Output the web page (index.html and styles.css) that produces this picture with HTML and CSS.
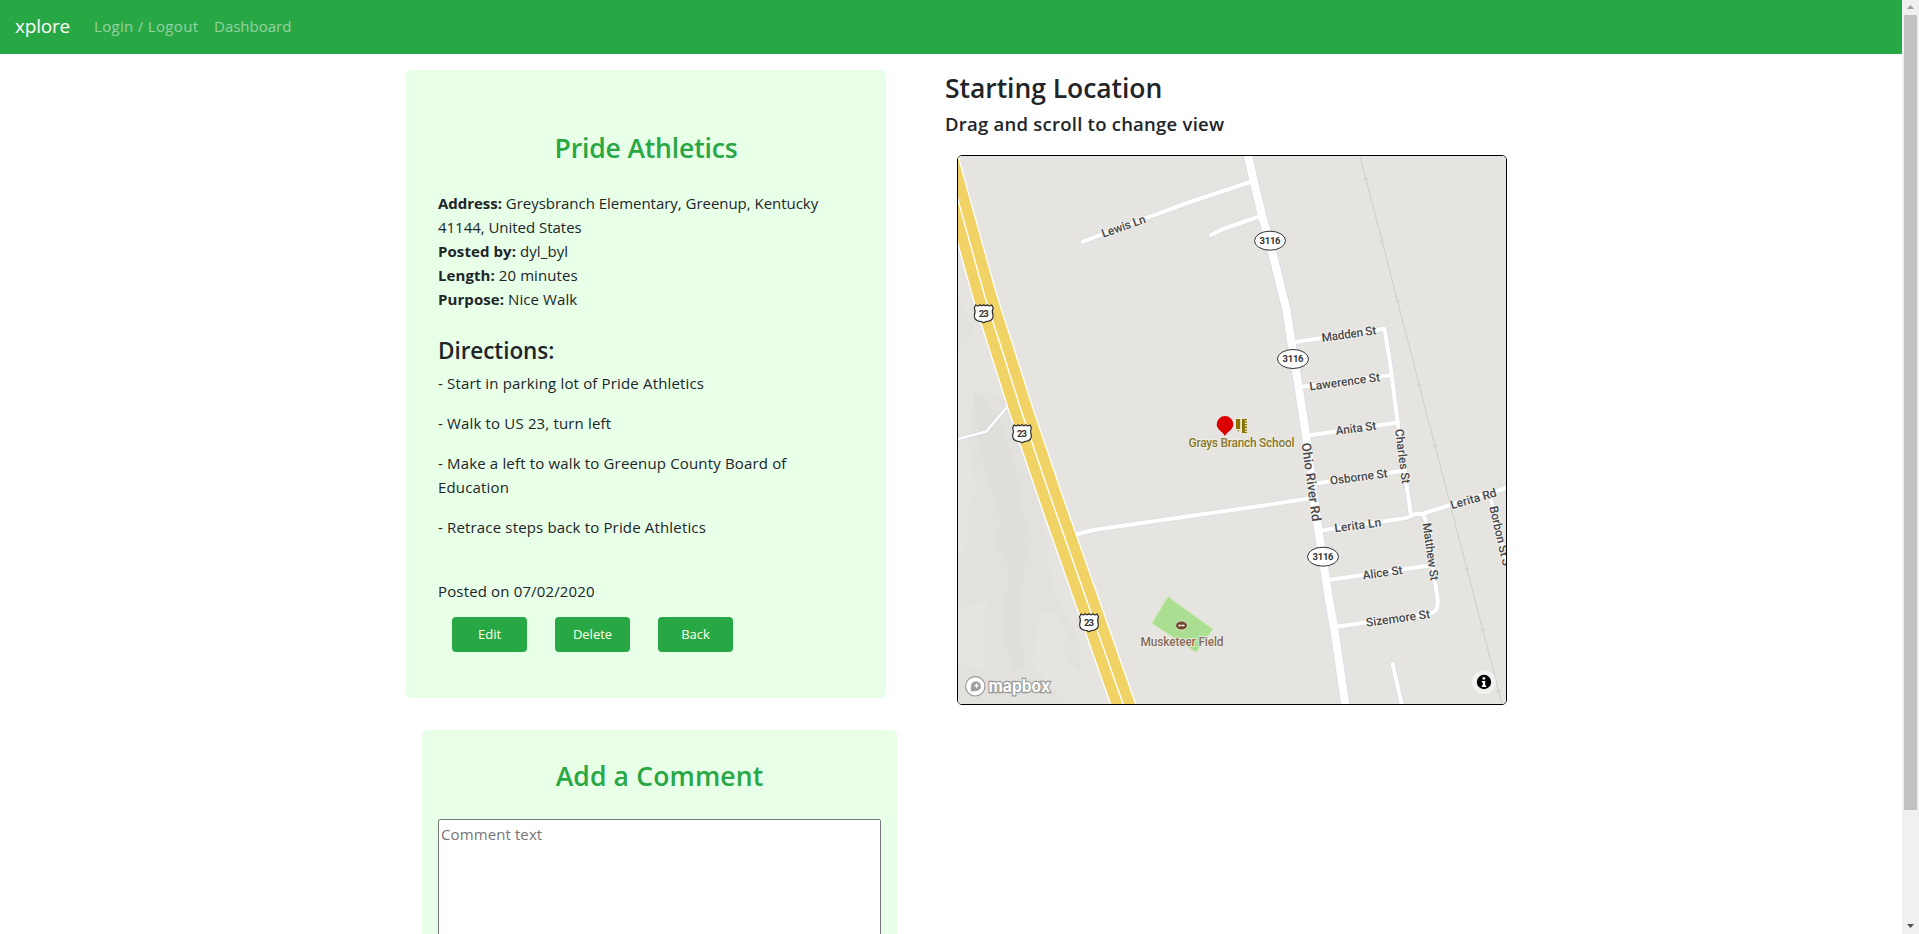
FILE: index.html
```html
<!DOCTYPE html>
<html lang="en">
<head>
<meta charset="utf-8">
<title>xplore</title>
<link rel="stylesheet" href="styles.css">
</head>
<body>
<div class="page">
  <nav class="navbar">
    <a class="brand">xplore</a>
    <a class="nav-link nav-login">Login / Logout</a>
    <a class="nav-link nav-dash">Dashboard</a>
  </nav>
  <main class="container">
    <div class="col-left">
      <section class="card walk">
        <h3 class="title">Pride Athletics</h3>
        <div class="facts">
          <div class="address"><b>Address:</b> Greysbranch Elementary, Greenup, Kentucky<br>41144, United States</div>
          <div><b>Posted by:</b> dyl_byl</div>
          <div><b>Length:</b> 20 minutes</div>
          <div><b>Purpose:</b> Nice Walk</div>
        </div>
        <h4 class="subtitle">Directions:</h4>
        <p>- Start in parking lot of Pride Athletics</p>
        <p>- Walk to US 23, turn left</p>
        <p>- Make a left to walk to Greenup County Board of<br>Education</p>
        <p>- Retrace steps back to Pride Athletics</p>
        <div class="posted">Posted on 07/02/2020</div>
        <div class="buttons">
          <button class="btn">Edit</button>
          <button class="btn">Delete</button>
          <button class="btn">Back</button>
        </div>
      </section>
      <section class="card comment">
        <h3 class="title title-comment">Add a Comment</h3>
        <textarea class="comment-text" placeholder="Comment text"></textarea>
      </section>
    </div>
    <div class="col-right">
      <h3 class="map-title">Starting Location</h3>
      <h5 class="map-hint">Drag and scroll to change view</h5>
      <div class="map">
        <svg class="map-svg" viewBox="958 156 548 548">
          <defs>
            <g id="us">
              <path d="M-8-8.500Q-5.500-6.800-4-8.700Q-2-6.800 0-8.700Q2-6.800 4-8.700Q5.500-6.800 8-8.500L9.500-5.500Q7.800-2.500 9.300 1.500Q9.800 6.500 5 7.600Q2 7.800 0 9.300Q-2 7.800-5 7.600Q-9.800 6.500-9.300 1.500Q-7.800-2.500-9.500-5.500Z" fill="#fff" stroke="#333" stroke-width="1.200"/>
              <text class="num" y="3.300" text-anchor="middle" textLength="10">23</text>
            </g>
            <g id="ky">
              <ellipse rx="15.500" ry="9.500" fill="#fff" stroke="#333" stroke-width="1"/>
              <text class="num" y="3.300" text-anchor="middle" textLength="21">3116</text>
            </g>
            <path id="river" d="M1247.500 154L1262 216L1269.500 241L1286.500 310L1291 340L1296 370L1306 435L1314 500L1322.500 557L1329 600L1334 627L1345.500 706"/>
            <path id="streets" d="M1082.700 241.700L1150 216.700L1190 202L1255 180.500M1211 235L1223 229L1262 215.500M1292 342.500L1384.500 328.800L1390.500 366L1397.700 423L1411 516M1300 387L1391.500 375M1308 435.500L1398 422.500M1315 483.500L1405 470.500M1321 530.500L1406 518L1415 514L1422 514L1450 505L1510 487M1076 534.500L1093 530L1260 506L1312 498M1422 514Q1425 516 1426 523L1437.500 598Q1439 611 1431.700 613L1336 626.700M1328 580L1430 565.500M1392.700 664L1402.500 708M1490 496L1506 560M1286 706L1286 706"/>
            <path id="lane" d="M956 439.500L986 431.700L1008 406"/>
            <path id="hwy" d="M944 149L958 200L985 297L1002 350L1021 410L1051.500 500L1088 604L1124.500 708"/>
          </defs>
          <rect x="958" y="156" width="548" height="548" fill="#e5e4e0"/>
          <g fill="#e2e1dd">
            <path d="M958 298L966 315L974 325L968 340L958 352Z"/>
            <path d="M974 393L988 391L1003 399L1016 410L1030 470L1046 530L1052 590L1080 640L1080 672L1064 655L1066 630L1055 612L1040 614L1032 665L1056 690L1068 704L990 704L984 658L986 600L960 610L958 560L970 540L966 510L976 495L968 440Z"/>
            <path d="M958 664L984 670L1004 664L1022 672L1030 704L958 704Z"/>
          </g>
          <g fill="#dfdeda">
            <path d="M974 396L986 398L1000 420L1016 465L1024 520L1031 540L1024 570L1018 610L1025 670L1015 670L1004 640L1004 612L1010 570L996 545L1000 520L980 450Z"/>
          </g>
          <path d="M1168 596.700L1212.700 629.300L1196 652.300L1152 623.300Z" fill="#aadf91" stroke="#c9e8a6" stroke-width="1"/>
          <g fill="none" stroke-linecap="round" stroke-linejoin="round">
            <g stroke="#d7d8e4">
              <use href="#streets" stroke-width="5.200"/><use href="#river" stroke-width="9.600"/><use href="#lane" stroke-width="4"/>
            </g>
            <g stroke="#fff">
              <use href="#streets" stroke-width="4"/><use href="#river" stroke-width="8.200"/><use href="#lane" stroke-width="2.400"/>
              <use href="#hwy" stroke-width="25"/>
            </g>
            <use href="#hwy" stroke="#f1d365" stroke-width="22.400"/>
            <use href="#hwy" stroke="#fff" stroke-width="1.400"/>
          </g>
          <g stroke="#c8c8c6" stroke-width=".8" fill="none">
            <path d="M1360 156L1419 384L1502 704"/>
            <path d="M1363.500 180L1367.700 178.500M1379.500 241L1383.700 239.500M1395.500 302L1399.700 300.500M1417 385L1421 383.500M1433 446.500L1437 445M1465 569.500L1469 568M1481 630.500L1485 629M1496.700 692L1500.700 690.500"/>
          </g>
          <g class="road">
            <text transform="translate(1103.300 237.800) rotate(-19.500)" textLength="46">Lewis Ln</text>
            <text transform="translate(1322.200 342) rotate(-8.100)" textLength="55">Madden St</text>
            <text transform="translate(1310 390.500) rotate(-7.600)" textLength="71">Lawerence St</text>
            <text transform="translate(1336.200 435) rotate(-7.700)" textLength="41">Anita St</text>
            <text transform="translate(1330.500 484.800) rotate(-7.500)" textLength="58">Osborne St</text>
            <text transform="translate(1335 532.300) rotate(-7.500)" textLength="47">Lerita Ln</text>
            <text transform="translate(1363.300 579.500) rotate(-8)" textLength="40">Alice St</text>
            <text transform="translate(1366.500 626.700) rotate(-7.800)" textLength="64.500">Sizemore St</text>
            <text transform="translate(1451.700 509.300) rotate(-16)" textLength="47.500">Lerita Rd</text>
            <text transform="translate(1395 429.500) rotate(82.700)" textLength="55">Charles St</text>
            <text class="big" transform="translate(1301.500 443.500) rotate(82.200)" textLength="79">Ohio River Rd</text>
            <text transform="translate(1422.500 523.500) rotate(82)" textLength="58">Matthew St</text>
            <text transform="translate(1489.300 507) rotate(77)" textLength="61">Borbon St S</text>
          </g>
          <use href="#us" x="983.700" y="313.500"/><use href="#us" x="1022" y="433.500"/><use href="#us" x="1089" y="622.500"/>
          <use href="#ky" x="1270" y="240.700"/><use href="#ky" x="1293" y="359"/><use href="#ky" x="1323" y="556.700"/>
          <g class="poi">
            <text class="school" x="1188.500" y="446.500" textLength="106">Grays Branch School</text>
            <text class="field" x="1140.500" y="645.500" textLength="83">Musketeer Field</text>
          </g>
          <g fill="#8a7400" stroke="#f4f2e4" stroke-width="1.400" paint-order="stroke">
            <path d="M1236 419h4.200v10h-4.200zM1236.800 430.200h2.600l-1.300 1.600z"/>
            <path d="M1242 419h5v1.200h-2.200v1.200h2.200v1.300h-2.200v1.300h2.200v1.300h-2.200v1.300h2.200v1.300h-2.200v1.300h2.200v1.300h-2.200v1.200h2.200v1.300h-5z" stroke-width=".4"/>
          </g>
          <path d="M1225 436C1222 431 1216.700 429.500 1216.700 424.300A8.300 8.300 0 0 1 1233.300 424.300C1233.300 429.500 1228 431 1225 436Z" fill="#dc0000"/>
          <path d="M1175.300 625.500Q1177 621 1181.500 621T1187.700 625.500Q1186 630 1181.500 630T1175.300 625.500Z" fill="#6f4a2d" stroke="#efe8df" stroke-width=".8"/>
          <path d="M1178.200 625.500h6.600M1179.900 624.200v2.600M1183.100 624.200v2.600" stroke="#fff" stroke-width=".8"/>
          <g>
            <circle cx="975.300" cy="686.300" r="9.700" fill="#fff" stroke="#999996" stroke-width="1.200"/>
            <path d="M971 691.200Q970.300 685 972.300 682.800A5 5 0 1 1 979.500 689.800Q977 691.800 971 691.200Z" fill="#a09f9c"/>
            <path d="M976.500 682.800l.8 2.100 2.100.8-2.100.8-.8 2.100-.8-2.100-2.100-.8 2.100-.8z" fill="#fff"/>
            <text class="mapbox" x="988.500" y="691.600" textLength="61.500" lengthAdjust="spacingAndGlyphs">mapbox</text>
          </g>
          <circle cx="1484" cy="682" r="12" fill="#fff" fill-opacity=".5"/>
          <circle cx="1484" cy="682" r="7.200" fill="#000"/>
          <path d="M1482.500 677.200h2.700v2.400h-2.700zM1481.800 681h3.400v4.600h1v1.500h-4.400v-1.500h1v-3.100h-1z" fill="#fff"/>
        </svg>
      </div>
    </div>
  </main>
</div>
<div class="scrollbar">
  <svg width="17" height="15" viewBox="0 0 17 15"><path d="M8.500 5L12 9H5Z" fill="#a0a0a0"/></svg>
  <div class="thumb"></div>
  <svg width="17" height="17" viewBox="0 0 17 17"><path d="M8.500 11L12 7H5Z" fill="#505050"/></svg>
</div>
</body>
</html>
```
FILE: styles.css
```css
* { box-sizing: border-box; }
body {
  margin: 0;
  height: 934px;
  display: flex;
  overflow: hidden;
  background: #fff;
  color: #212529;
  font: 400 15px/24px "Open Sans", "Noto Sans", sans-serif;
}
h3, h4, h5, p { margin: 0; }
h3, h4, h5 { font-weight: 600; }
.page { flex: 1; height: 934px; overflow: hidden; }
.navbar {
  height: 54px;
  padding: 0 0 2px 15px;
  display: flex;
  align-items: center;
  background: #28a745;
}
.brand { width: 79px; font-size: 19px; letter-spacing: -.2px; color: #fff; }
.nav-link { color: rgba(255, 255, 255, .5); white-space: nowrap; }
.nav-login { width: 120px; letter-spacing: .32px; }
.container { display: flex; padding: 16px 0 0 406px; }
.col-left { width: 539px; }
.card { background: #e8ffe8; border-radius: 5px; white-space: nowrap; }
.walk { width: 480px; height: 628px; padding: 61px 32px 0; }
.title {
  text-align: center;
  color: #28a745;
  font-size: 26.500px;
  line-height: 34px;
  letter-spacing: -.15px;
}
.title-comment { letter-spacing: .15px; }
.facts { margin-top: 26px; letter-spacing: .08px; }
.address { letter-spacing: -.03px; }
.subtitle { margin-top: 25px; font-size: 22.500px; line-height: 29px; letter-spacing: -.05px; }
.walk p { margin-bottom: 16px; letter-spacing: .16px; }
.subtitle + p { margin-top: 6px; }
.posted { margin-top: 40px; letter-spacing: .15px; }
.buttons { display: flex; gap: 28px; padding: 14px 0 0 14px; }
.btn {
  width: 75px;
  height: 35px;
  padding: 0;
  border: 0;
  border-radius: 4px;
  background: #28a745;
  color: #ffffe8;
  font: 13px/35px "Open Sans", sans-serif;
}
.comment { width: 475px; height: 320px; margin: 32px 0 0 16px; padding: 29px 16px 0; }
.comment-text {
  display: block;
  width: 443px;
  height: 230px;
  margin-top: 26px;
  padding: 2px;
  border: 1px solid #767676;
  border-radius: 2px;
  resize: none;
  font: 15px/24px "Open Sans", sans-serif;
  letter-spacing: .1px;
}
.comment-text::placeholder { color: #757575; }
.col-right { width: 562px; white-space: nowrap; }
.map-title { font-size: 26.500px; line-height: 34px; padding-top: 1px; letter-spacing: -.05px; }
.map-hint { font-size: 18.500px; line-height: 24px; margin-top: 7px; letter-spacing: .24px; }
.map {
  width: 550px;
  height: 550px;
  margin: 19px 0 0 12px;
  border: 1px solid #000;
  border-radius: 5px;
  overflow: hidden;
}
.map-svg { display: block; width: 548px; height: 548px; font-family: Roboto, sans-serif; }
.num { font-size: 9.500px; font-weight: 700; fill: #333; }
.road { font-size: 12px; font-weight: 500; fill: #48484a; stroke: #f2f1ee; stroke-width: 2px; paint-order: stroke; }
.big { font-size: 13px; }
.poi { font-size: 12px; font-weight: 500; stroke: #f1f0e8; stroke-width: 1.500px; paint-order: stroke; }
.school { fill: #86772a; }
.field { fill: #866958; }
.mapbox {
  font: 700 17px Inter, sans-serif;
  fill: #fff;
  stroke: #999996;
  stroke-width: 2.400px;
  paint-order: stroke;
}
.scrollbar {
  width: 17px;
  height: 934px;
  display: flex;
  flex-direction: column;
  background: #f0f0f0;
}
.scrollbar svg { display: block; }
.thumb { width: 13px; height: 795px; margin: 0 2px 107px; background: #c1c1c1; }
```
